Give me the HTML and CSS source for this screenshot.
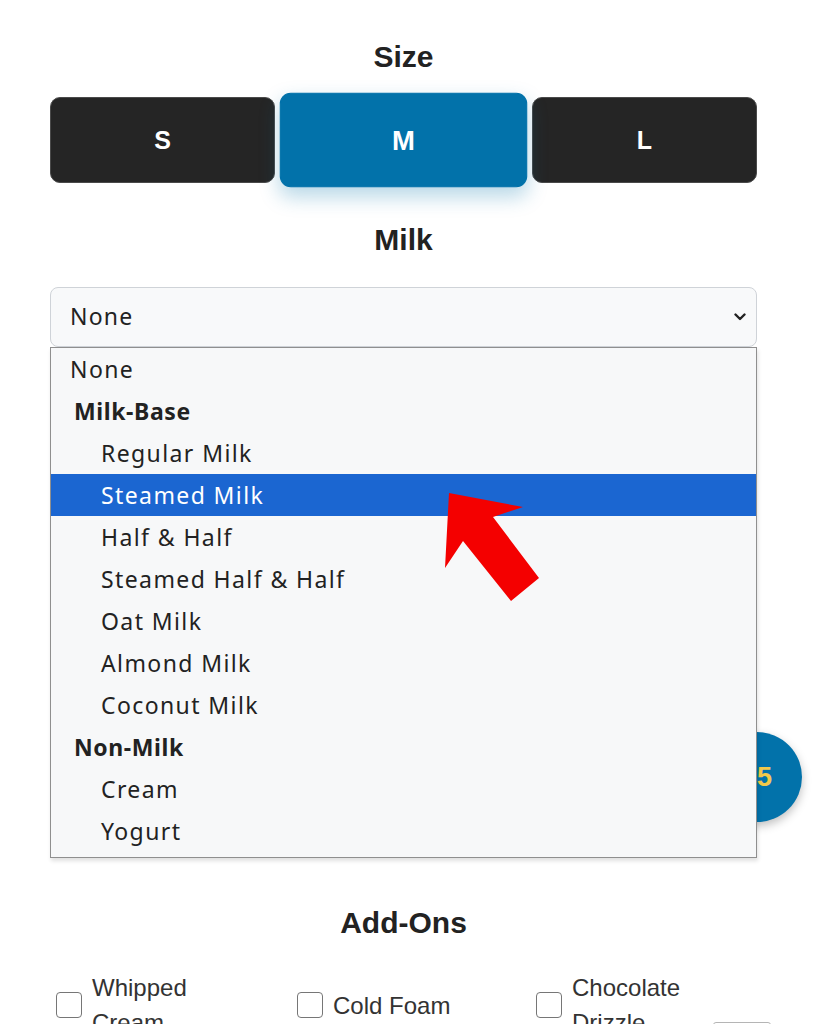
FILE: index.html
```html
<!DOCTYPE html>
<html>
<head>
<meta charset="utf-8">
<link rel="stylesheet" href="styles.css">
</head>
<body>
<div class="page">
  <h2 class="title">Size</h2>
  <div class="sizes">
    <button class="size">S</button>
    <button class="size active">M</button>
    <button class="size">L</button>
  </div>
  <h2 class="title title-milk">Milk</h2>
  <div class="select">
    <span class="select-value">None</span>
    <svg class="chev" width="12" height="8" viewBox="0 0 12 8"><path d="M1.5 1.5 L6 6 L10.5 1.5" fill="none" stroke="#222" stroke-width="2.4" stroke-linecap="round" stroke-linejoin="round"/></svg>
  </div>
  <div class="listbox">
    <div class="opt top">None</div>
    <div class="group">Milk-Base</div>
    <div class="opt">Regular Milk</div>
    <div class="opt selected">Steamed Milk</div>
    <div class="opt">Half &amp; Half</div>
    <div class="opt">Steamed Half &amp; Half</div>
    <div class="opt">Oat Milk</div>
    <div class="opt">Almond Milk</div>
    <div class="opt">Coconut Milk</div>
    <div class="group">Non-Milk</div>
    <div class="opt">Cream</div>
    <div class="opt">Yogurt</div>
  </div>
  <h2 class="title title-addons">Add-Ons</h2>
  <div class="addons">
    <label class="addon a1"><span class="box"></span><span class="addon-text">Whipped Cream</span></label>
    <label class="addon a2"><span class="box"></span><span class="addon-text">Cold Foam</span></label>
    <label class="addon a3"><span class="box"></span><span class="addon-text">Chocolate Drizzle</span></label>
    <div class="extra"></div>
  </div>
</div>
<div class="cart">$5</div>
<svg class="arrow" width="819" height="1024" viewBox="0 0 819 1024"><polygon points="449,493 523,507 493,517 539,578 511,601 463,541 445,568" fill="#f40000"/></svg>
</body>
</html>
```
FILE: styles.css
```css
html, body {
  margin: 0;
  padding: 0;
  background: #ffffff;
}
body {
  width: 819px;
  height: 1024px;
  overflow: hidden;
  font-family: "Liberation Sans", Arial, sans-serif;
  color: #222;
}
.page {
  margin-left: 50px;
  width: 707px;
  padding-top: 39px;
}
.title {
  margin: 0;
  font-size: 30px;
  line-height: 36px;
  font-weight: bold;
  text-align: center;
  color: #222;
}
.sizes {
  margin-top: 22px;
  display: flex;
  gap: 16px;
}
.size {
  flex: 1;
  height: 86px;
  border: 1px solid #4a4a4a;
  border-radius: 10px;
  background: #252525;
  color: #fff;
  font-family: "Liberation Sans", Arial, sans-serif;
  font-weight: bold;
  font-size: 25px;
  padding: 0;
}
.size.active {
  background: #0272aa;
  border-color: #0272aa;
  transform: scale(1.1);
  box-shadow: 0 8px 18px rgba(2, 114, 170, 0.28);
}
.title-milk {
  margin-top: 39px;
}
.select {
  margin-top: 29px;
  height: 58px;
  border: 1px solid #cfd3d8;
  border-radius: 8px;
  background: #f8f9fa;
  display: flex;
  align-items: center;
  justify-content: space-between;
  padding: 0 10px 0 19px;
  font-family: "Noto Sans", "Open Sans", sans-serif;
  font-size: 23px;
  letter-spacing: 1.2px;
  color: #222;
}
.select-value {
  margin-top: -2px;
}
.listbox {
  position: relative;
  z-index: 2;
  margin-top: 0;
  border: 1px solid #8f8f8f;
  background: #f7f8f9;
  padding: 0 0 5px 0;
  box-shadow: 1px 3px 4px rgba(0, 0, 0, 0.12);
  font-family: "Noto Sans", "Open Sans", sans-serif;
  font-size: 23px;
  letter-spacing: 1.4px;
  color: #222;
}
.opt, .group {
  height: 42px;
  line-height: 42px;
  padding-left: 50px;
  white-space: nowrap;
}
.opt.top {
  padding-left: 19px;
}
.group {
  padding-left: 23px;
  font-weight: bold;
  letter-spacing: 0.6px;
}
.opt.selected {
  background: #1b66d1;
  color: #fff;
}
.title-addons {
  margin-top: 47px;
}
.addons {
  margin-top: 29px;
  margin-left: 6px;
  display: flex;
  align-items: flex-start;
}
.addon {
  flex: none;
  height: 70px;
  display: flex;
  align-items: center;
  gap: 10px;
  font-size: 24px;
  line-height: 35px;
  color: #333;
}
.a1 { width: 241px; }
.a2 { width: 239px; }
.a3 { width: 176px; }
.addon-text {
  max-width: 130px;
}
.box {
  flex: none;
  width: 24px;
  height: 24px;
  border: 1.5px solid #767676;
  border-radius: 4px;
  background: #fff;
}
.extra {
  flex: none;
  margin-top: 52px;
  margin-left: 1px;
  width: 56px;
  height: 40px;
  border: 1px solid #b5b5b5;
  border-radius: 3px;
}
.cart {
  position: absolute;
  left: 712px;
  top: 732px;
  width: 90px;
  height: 90px;
  border-radius: 50%;
  background: #0272aa;
  box-shadow: 0 4px 10px rgba(0, 0, 0, 0.25);
  color: #f3c94a;
  font-weight: bold;
  font-size: 27px;
  display: flex;
  align-items: center;
  justify-content: center;
  z-index: 1;
}
.chev {
  display: block;
}
.arrow {
  position: absolute;
  left: 0;
  top: 0;
  z-index: 5;
  pointer-events: none;
}
```
